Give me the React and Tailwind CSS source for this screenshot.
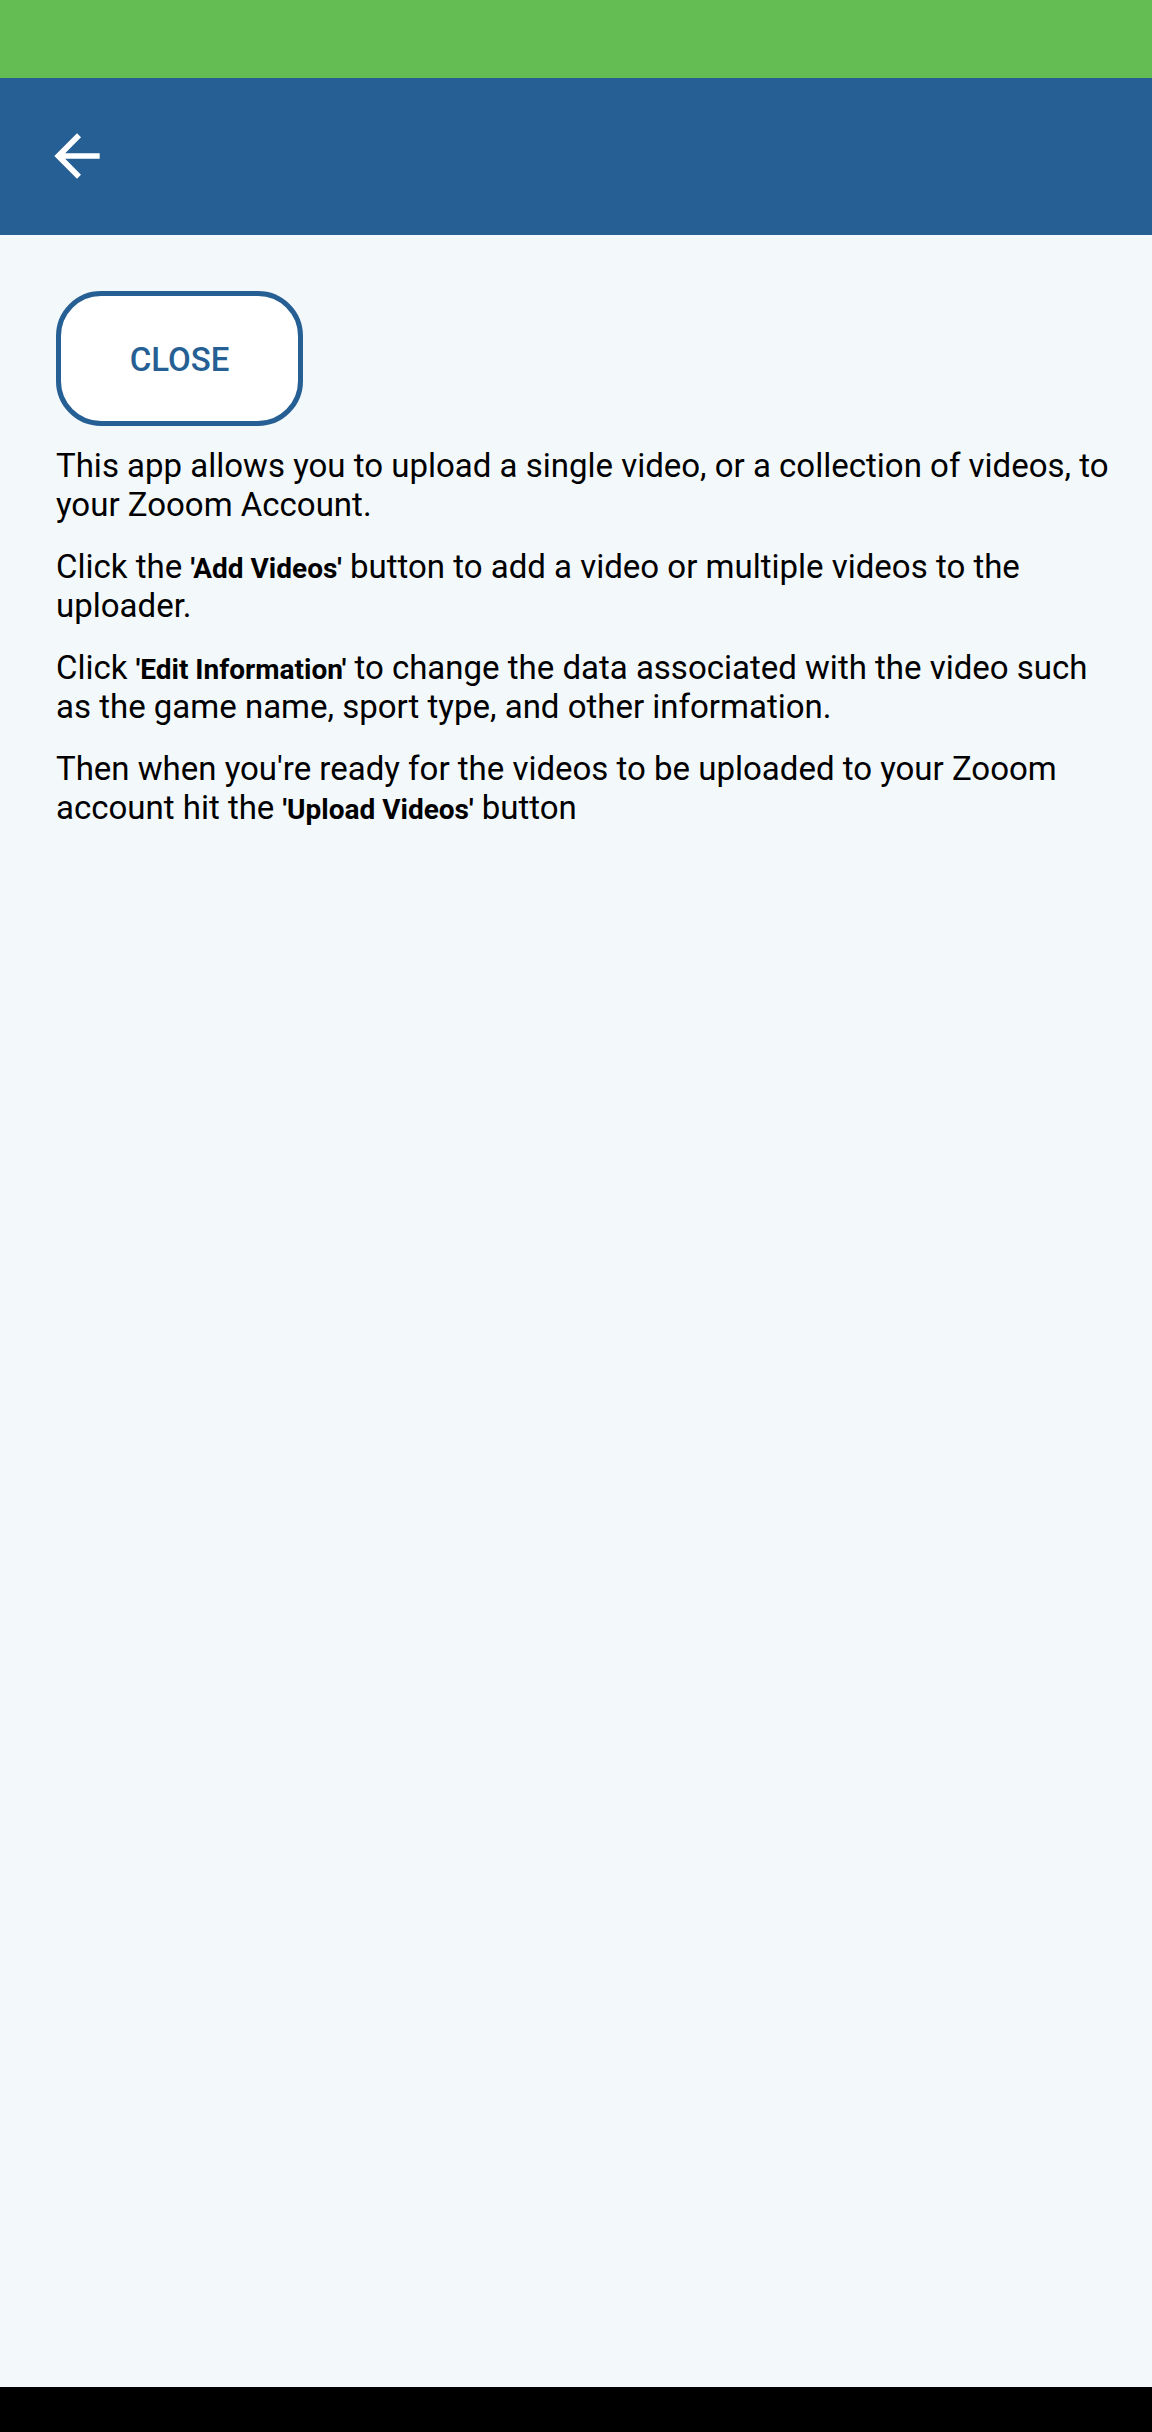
export default function App() {
  return (
    <div className="flex min-h-screen flex-col bg-[#f3f8fb] font-['Roboto',sans-serif] text-black">
      <div className="h-[78px] bg-[#63bd53]" />
      <header className="flex h-[157px] items-center bg-[#255f93] px-[43px]">
        <button type="button" aria-label="Back" className="text-white">
          <svg viewBox="0 0 24 24" className="mb-0.5 size-[68px]" fill="currentColor">
            <path d="M20 11H7.83l5.59-5.59L12 4l-8 8 8 8 1.41-1.41L7.83 13H20v-2z" />
          </svg>
        </button>
      </header>
      <main className="flex flex-1 flex-col items-start pt-14 pr-10 pl-14">
        <button
          type="button"
          className="mb-5 h-[135px] w-[247px] rounded-[45px] border-[5px] border-[#255f93] bg-white pt-0.5 text-[33px] font-medium text-[#255f93]"
        >
          CLOSE
        </button>
        <div className="flex flex-col gap-[23px] text-[33px] leading-[39px]">
          <p>This app allows you to upload a single video, or a collection of videos, to your Zooom Account.</p>
          <p>
            Click the <b className="text-[28px] leading-none">'Add Videos'</b> button to add a video or multiple videos to the
            uploader.
          </p>
          <p>
            Click <b className="text-[28px] leading-none">'Edit Information'</b> to change the data associated with the video such
            as the game name, sport type, and other information.
          </p>
          <p>
            Then when you're ready for the videos to be uploaded to your Zooom account hit the{" "}
            <b className="text-[28px] leading-none">'Upload Videos'</b> button
          </p>
        </div>
      </main>
      <div className="h-[45px] bg-black" />
    </div>
  );
}
